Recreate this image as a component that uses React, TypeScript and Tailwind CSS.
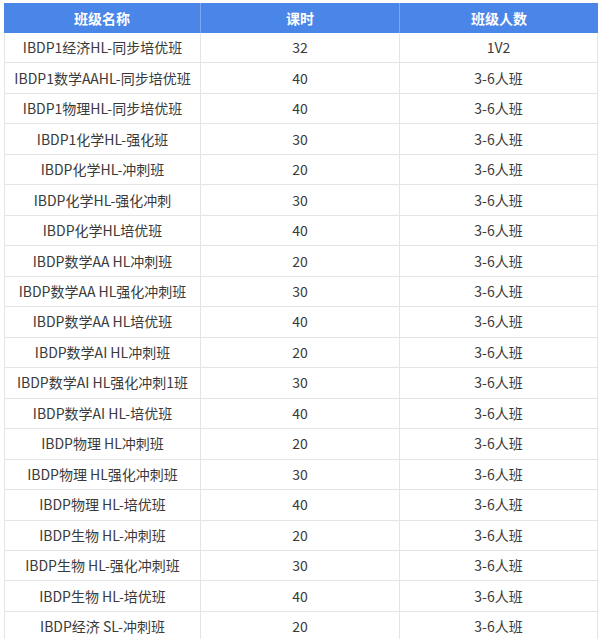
import React from "react";

const rows: [string, string, string][] = [
  ["IBDP1经济HL-同步培优班", "32", "1V2"],
  ["IBDP1数学AAHL-同步培优班", "40", "3-6人班"],
  ["IBDP1物理HL-同步培优班", "40", "3-6人班"],
  ["IBDP1化学HL-强化班", "30", "3-6人班"],
  ["IBDP化学HL-冲刺班", "20", "3-6人班"],
  ["IBDP化学HL-强化冲刺", "30", "3-6人班"],
  ["IBDP化学HL培优班", "40", "3-6人班"],
  ["IBDP数学AA HL冲刺班", "20", "3-6人班"],
  ["IBDP数学AA HL强化冲刺班", "30", "3-6人班"],
  ["IBDP数学AA HL培优班", "40", "3-6人班"],
  ["IBDP数学AI HL冲刺班", "20", "3-6人班"],
  ["IBDP数学AI HL强化冲刺1班", "30", "3-6人班"],
  ["IBDP数学AI HL-培优班", "40", "3-6人班"],
  ["IBDP物理 HL冲刺班", "20", "3-6人班"],
  ["IBDP物理 HL强化冲刺班", "30", "3-6人班"],
  ["IBDP物理 HL-培优班", "40", "3-6人班"],
  ["IBDP生物 HL-冲刺班", "20", "3-6人班"],
  ["IBDP生物 HL-强化冲刺班", "30", "3-6人班"],
  ["IBDP生物 HL-培优班", "40", "3-6人班"],
  ["IBDP经济 SL-冲刺班", "20", "3-6人班"],
];

export default function App() {
  return (
    <div
      className="w-[603px] h-[639px] overflow-hidden bg-white pt-[3px] pl-[4px]"
      style={{ fontFamily: '"Noto Sans CJK SC", "Noto Sans", sans-serif' }}
    >
      <div className="w-[594px]">
        <div className="flex h-[30px] bg-[#4a86e8] text-white text-[14px] font-bold">
          <div className="w-[197px] flex items-center justify-center border-r border-[#7aa7ef]">班级名称</div>
          <div className="w-[199px] flex items-center justify-center border-r border-[#7aa7ef]">课时</div>
          <div className="flex-1 flex items-center justify-center">班级人数</div>
        </div>
        {rows.map((r, i) => (
          <div
            key={i}
            className="flex h-[30.47px] border-b border-l border-r border-[#e4e4e4] text-[14px] text-[#3a3a3a]"
          >
            <div className="w-[196px] flex items-center justify-center border-r border-[#e4e4e4] whitespace-nowrap">
              {r[0]}
            </div>
            <div className="w-[199px] flex items-center justify-center border-r border-[#e4e4e4]">{r[1]}</div>
            <div className="flex-1 flex items-center justify-center">{r[2]}</div>
          </div>
        ))}
      </div>
    </div>
  );
}
